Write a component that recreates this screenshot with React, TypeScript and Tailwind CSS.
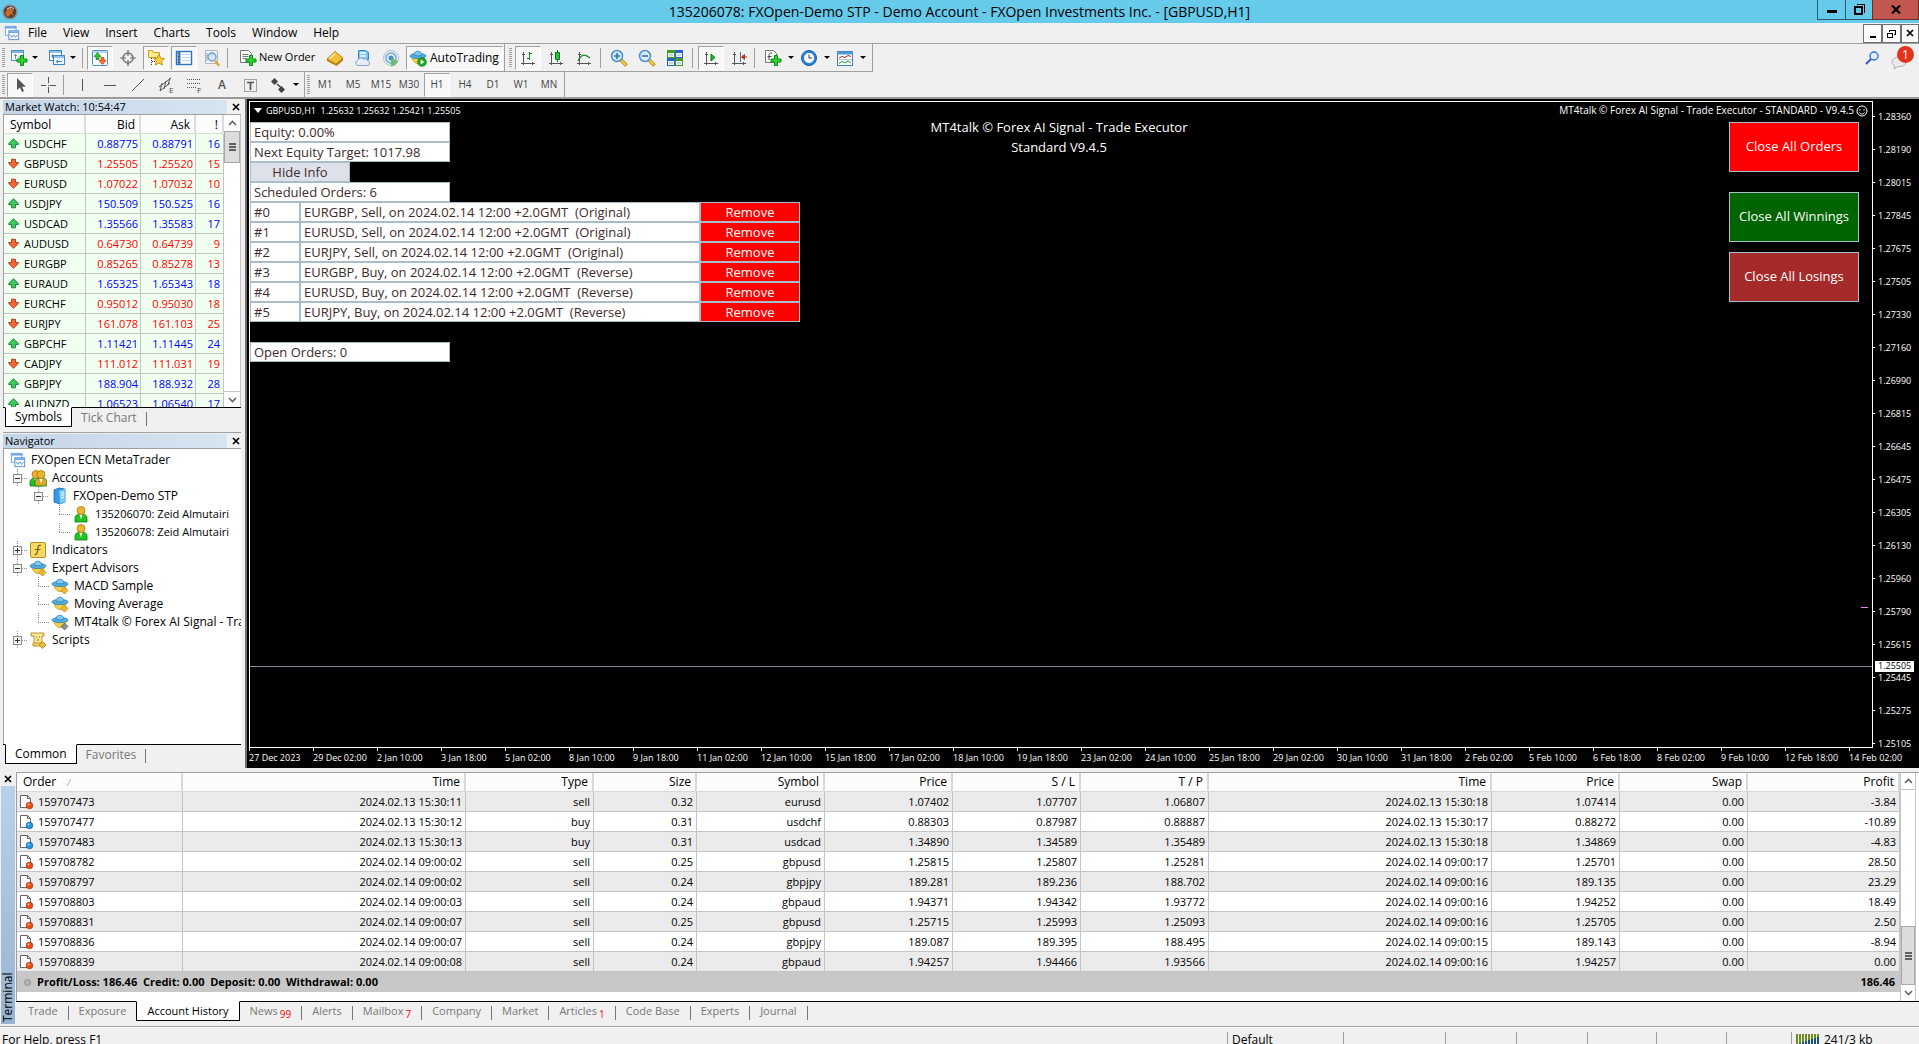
import { useState } from 'react'
import type { ReactNode } from 'react'

type Quote = [string, string, string, number, boolean]

const quotes: Quote[] = [
  ['USDCHF', '0.88775', '0.88791', 16, true],
  ['GBPUSD', '1.25505', '1.25520', 15, false],
  ['EURUSD', '1.07022', '1.07032', 10, false],
  ['USDJPY', '150.509', '150.525', 16, true],
  ['USDCAD', '1.35566', '1.35583', 17, true],
  ['AUDUSD', '0.64730', '0.64739', 9, false],
  ['EURGBP', '0.85265', '0.85278', 13, false],
  ['EURAUD', '1.65325', '1.65343', 18, true],
  ['EURCHF', '0.95012', '0.95030', 18, false],
  ['EURJPY', '161.078', '161.103', 25, false],
  ['GBPCHF', '1.11421', '1.11445', 24, true],
  ['CADJPY', '111.012', '111.031', 19, false],
  ['GBPJPY', '188.904', '188.932', 28, true],
  ['AUDNZD', '1.06523', '1.06540', 17, true],
]

const scheduled = [
  'EURGBP, Sell, on 2024.02.14 12:00 +2.0GMT  (Original)',
  'EURUSD, Sell, on 2024.02.14 12:00 +2.0GMT  (Original)',
  'EURJPY, Sell, on 2024.02.14 12:00 +2.0GMT  (Original)',
  'EURGBP, Buy, on 2024.02.14 12:00 +2.0GMT  (Reverse)',
  'EURUSD, Buy, on 2024.02.14 12:00 +2.0GMT  (Reverse)',
  'EURJPY, Buy, on 2024.02.14 12:00 +2.0GMT  (Reverse)',
]

const prices = [
  '1.28360', '1.28190', '1.28015', '1.27845', '1.27675', '1.27505', '1.27330', '1.27160', '1.26990', '1.26815',
  '1.26645', '1.26475', '1.26305', '1.26130', '1.25960', '1.25790', '1.25615', '1.25445', '1.25275', '1.25105',
]

const dates = [
  '27 Dec 2023', '29 Dec 02:00', '2 Jan 10:00', '3 Jan 18:00', '5 Jan 02:00', '8 Jan 10:00', '9 Jan 18:00',
  '11 Jan 02:00', '12 Jan 10:00', '15 Jan 18:00', '17 Jan 02:00', '18 Jan 10:00', '19 Jan 18:00', '23 Jan 02:00',
  '24 Jan 10:00', '25 Jan 18:00', '29 Jan 02:00', '30 Jan 10:00', '31 Jan 18:00', '2 Feb 02:00', '5 Feb 10:00',
  '6 Feb 18:00', '8 Feb 02:00', '9 Feb 10:00', '12 Feb 18:00', '14 Feb 02:00',
]

const history = [
  ['159707473', '2024.02.13 15:30:11', 'sell', '0.32', 'eurusd', '1.07402', '1.07707', '1.06807', '2024.02.13 15:30:18', '1.07414', '0.00', '-3.84'],
  ['159707477', '2024.02.13 15:30:12', 'buy', '0.31', 'usdchf', '0.88303', '0.87987', '0.88887', '2024.02.13 15:30:17', '0.88272', '0.00', '-10.89'],
  ['159707483', '2024.02.13 15:30:13', 'buy', '0.31', 'usdcad', '1.34890', '1.34589', '1.35489', '2024.02.13 15:30:18', '1.34869', '0.00', '-4.83'],
  ['159708782', '2024.02.14 09:00:02', 'sell', '0.25', 'gbpusd', '1.25815', '1.25807', '1.25281', '2024.02.14 09:00:17', '1.25701', '0.00', '28.50'],
  ['159708797', '2024.02.14 09:00:02', 'sell', '0.24', 'gbpjpy', '189.281', '189.236', '188.702', '2024.02.14 09:00:16', '189.135', '0.00', '23.29'],
  ['159708803', '2024.02.14 09:00:03', 'sell', '0.24', 'gbpaud', '1.94371', '1.94342', '1.93772', '2024.02.14 09:00:16', '1.94252', '0.00', '18.49'],
  ['159708831', '2024.02.14 09:00:07', 'sell', '0.25', 'gbpusd', '1.25715', '1.25993', '1.25093', '2024.02.14 09:00:16', '1.25705', '0.00', '2.50'],
  ['159708836', '2024.02.14 09:00:07', 'sell', '0.24', 'gbpjpy', '189.087', '189.395', '188.495', '2024.02.14 09:00:15', '189.143', '0.00', '-8.94'],
  ['159708839', '2024.02.14 09:00:08', 'sell', '0.24', 'gbpaud', '1.94257', '1.94466', '1.93566', '2024.02.14 09:00:16', '1.94257', '0.00', '0.00'],
]

const Svg = ({ size = 18, children }: { size?: number; children: ReactNode }) => (
  <svg width={size} height={size} viewBox="0 0 18 18" fill="none" className="shrink-0" aria-hidden="true">
    {children}
  </svg>
)

const Plus = () => (
  <path d="M10.5 6.5h3v3.5h3.5v3h-3.5v3.5h-3v-3.5H7v-3h3.5z" fill="#2fd32f" stroke="#0b8a12" />
)

const NewChartIcon = () => (
  <Svg>
    <rect x="1.5" y="1.5" width="12" height="10" fill="#fff" stroke="#4f8ecb" />
    <path d="M2 3h11" stroke="#7fb4e6" strokeWidth="2" />
    <path d="M5.5 5v5M4 6.5h3M8 8h3" stroke="#6d8fb5" />
    <Plus />
  </Svg>
)

const ProfilesIcon = () => (
  <Svg>
    <rect x="1.5" y="1.5" width="12" height="10" fill="#fff" stroke="#3f86cc" />
    <path d="M2 3h11" stroke="#8fc0ee" strokeWidth="2" />
    <path d="M3 7h2M4.5 5v4" stroke="#6d8fb5" />
    <rect x="5.5" y="6.5" width="11" height="9" fill="#e9f3fd" stroke="#3f86cc" />
    <path d="M6 8h10" stroke="#8fc0ee" strokeWidth="2" />
    <path d="M8 12.5h6M9.5 11v3" stroke="#3f86cc" />
  </Svg>
)

const MarketWatchIcon = () => (
  <Svg>
    <rect x="1.5" y="1.5" width="15" height="15" rx="1" fill="#fff" stroke="#4a8fd0" />
    <path d="M2 3h14" stroke="#b5d6f5" strokeWidth="2" />
    <path d="M6.5 3.5 10 7.5H8v3H5v-3H3z" fill="#35c435" stroke="#0e7f12" strokeWidth=".7" />
    <path d="m11.5 15.5-3.5-4h2v-3h3v3h2z" fill="#ff7133" stroke="#b8370b" strokeWidth=".7" />
  </Svg>
)

const TargetIcon = () => (
  <Svg>
    <circle cx="9" cy="9" r="5" stroke="#777" strokeWidth="1.5" />
    <path d="M9 1v6M9 11v6M1 9h6M11 9h6" stroke="#666" strokeWidth="1.2" />
  </Svg>
)

const NavigatorIcon = () => (
  <Svg>
    <path d="M1.5 8.5v-7h4l1 2h6v5z" fill="#ffe98c" stroke="#c9a227" />
    <path d="M4.5 9v8M5 12.5h3" stroke="#333" strokeDasharray="1 1" />
    <path d="m12 5.5 1.7 3.6 3.8.4-2.8 2.6.8 4-3.5-2-3.5 2 .8-4-2.8-2.6 3.8-.4z" fill="#ffd23c" stroke="#b98412" strokeWidth=".8" />
  </Svg>
)

const TerminalIcon = () => (
  <Svg>
    <rect x="1.5" y="2.5" width="15" height="13" fill="#fff" stroke="#2f74b8" strokeWidth="1.4" />
    <path d="M4 3v12" stroke="#4f86c2" strokeWidth="3" />
    <path d="M4 4v11" stroke="#1b2f45" strokeDasharray="1 2" />
    <path d="M7 5.5h8M7 8.5h8M7 11.5h8" stroke="#bcd2ee" />
  </Svg>
)

const TesterIcon = () => (
  <Svg>
    <path d="M2.5 1.5h12v13h-12z" fill="#f4f4f4" stroke="#b5b5b5" />
    <path d="M4 4v8M4 6h8M8 3v8" stroke="#8ba7c5" />
    <circle cx="9" cy="8" r="4" fill="#cfe6fa" fillOpacity=".8" stroke="#6b9ccc" strokeWidth="1.3" />
    <path d="m12 12 4 4.5" stroke="#d9a72a" strokeWidth="2.5" />
  </Svg>
)

const NewOrderIcon = () => (
  <Svg>
    <path d="M1.5 1.5h8l3 3v9h-11z" fill="#fff" stroke="#777" />
    <path d="M3.5 5.5h6M3.5 7.5h6M3.5 9.5h4" stroke="#777" />
    <Plus />
  </Svg>
)

const BookIcon = () => (
  <Svg>
    <path d="m1 10 8-7.5L17 9l-7 6z" fill="#f3c23c" stroke="#b98210" />
    <path d="m1 10 9 5 7-6v2.5L10.5 17 1 12z" fill="#b98210" />
    <path d="m3.5 9.5 5.5-5" stroke="#fff0ae" strokeWidth="1.5" />
  </Svg>
)

const CloudIcon = () => (
  <Svg>
    <path d="M4.5 1.5h7l3 2v7h-10z" fill="#7cc2f5" stroke="#2a86d0" />
    <path d="M6 4h6M6 7h6" stroke="#fff" strokeWidth="1.5" />
    <path d="M3.5 16.5a2.7 2.7 0 0 1 0-5 3.5 3.5 0 0 1 6-1.5 3 3 0 0 1 4 1.5 2.6 2.6 0 0 1 .5 5z" fill="#e5edf7" stroke="#7fa3cc" />
  </Svg>
)

const SignalIcon = () => (
  <Svg>
    <circle cx="9" cy="9" r="7.5" fill="#e4eef5" stroke="#a9c4d8" />
    <circle cx="9" cy="9" r="5" stroke="#7aa6ce" strokeWidth="1.4" />
    <circle cx="9" cy="9" r="2.5" fill="#3f8fd0" />
    <path d="M9 9v8.5A8 8 0 0 0 16 12" fill="#59b659" fillOpacity=".8" />
  </Svg>
)

const Hat = ({ badge }: { badge: ReactNode }) => (
  <Svg>
    <path d="M3 8c1 5 4 7 7 6.5S15 10 15 8z" fill="#f7d046" stroke="#c79518" strokeWidth=".8" />
    <ellipse cx="9" cy="7" rx="8" ry="2.6" fill="#55aee0" stroke="#2b7cb4" strokeWidth=".8" />
    <path d="M5 6c0-5 7.5-5 8 0-2 1.2-6 1.2-8 0z" fill="#7cc8ee" stroke="#2b7cb4" strokeWidth=".8" />
    {badge}
  </Svg>
)

const AutoTradingIcon = () => (
  <Hat
    badge={
      <>
        <circle cx="13" cy="13" r="4.3" fill="#1fae25" stroke="#0c7d12" strokeWidth=".8" />
        <path d="m11.7 10.5 3.5 2.5-3.5 2.5z" fill="#fff" />
      </>
    }
  />
)

const ExpertIcon = ({ grey }: { grey?: boolean }) => (
  <Hat badge={<path d="m13.5 10 3.5 3.5-3.5 3.5-3.5-3.5z" fill={grey ? '#8c8c8c' : '#e9b93a'} stroke={grey ? '#666' : '#b5860f'} strokeWidth=".8" />} />
)

const Axes = ({ children }: { children: ReactNode }) => (
  <Svg>
    <path d="M4.5 3v13M2 14.5h14M3 5.5h3M13.5 13v3" stroke="#555" shapeRendering="crispEdges" />
    {children}
  </Svg>
)

const ZoomIcon = ({ plus }: { plus?: boolean }) => (
  <Svg>
    <path d="m11 11 5.5 5.5" stroke="#b8860b" strokeWidth="3.6" />
    <path d="m11 11 5 5" stroke="#f5cc45" strokeWidth="2" />
    <circle cx="7" cy="7" r="5.5" fill="#d5ebfb" stroke="#4a90cc" strokeWidth="1.5" />
    <path d={plus ? 'M4 7h6M7 4v6' : 'M4 7h6'} stroke="#2f74b8" strokeWidth="1.6" />
  </Svg>
)

const TileIcon = () => (
  <Svg>
    <path d="M1 1h8v8H1zM9 9h8v8H9z" fill="#3f9e1d" />
    <path d="M9 1h8v8H9zM1 9h8v8H1z" fill="#2a61d4" />
    <path d="M2 4h6v4H2zM10 4h6v4h-6zM2 12h6v4H2zM10 12h6v4h-6z" fill="#eef4ea" />
    <path d="M3 6h4M11 6h4M3 14h4M11 14h4" stroke="#8fb3dd" />
  </Svg>
)

const AddIndicatorIcon = () => (
  <Svg>
    <path d="M1.5 1.5h8l3 3v9h-11z" fill="#fff" stroke="#777" />
    <path d="M8 4c-3 0-3 1-3 3v4M3.5 7.5h4" stroke="#444" />
    <Plus />
  </Svg>
)

const ClockIcon = () => (
  <Svg>
    <circle cx="9" cy="9" r="7.5" fill="#2b86dc" stroke="#155a9f" />
    <circle cx="9" cy="9" r="5" fill="#fff" />
    <path d="M9 5.5V9h3" stroke="#333" />
  </Svg>
)

const TemplateIcon = () => (
  <Svg>
    <rect x="1.5" y="2.5" width="15" height="14" fill="#fff" stroke="#3f7fc0" />
    <path d="M1 4h16" stroke="#4f95dc" strokeWidth="3" />
    <path d="M2 10.5h14" stroke="#b5c8dd" />
    <path d="m3 9 3-1.5 3 1 3-2 3 1" stroke="#b3261e" />
    <path d="m3 14.5 3-2 3 1.5 3-2 3 2" stroke="#1d9a2a" />
  </Svg>
)

const LogoIcon = () => (
  <Svg size={16}>
    <rect x="1.5" y="1.5" width="12" height="10" fill="#fff" stroke="#5f9ddf" />
    <path d="M1 3h13" stroke="#6ea8e8" strokeWidth="2" />
    <rect x="5.5" y="6.5" width="11" height="10" fill="#fff" stroke="#4a86d8" />
    <path d="M5 8h12" stroke="#6ea8e8" strokeWidth="2" />
    <path d="m7 11 2 3 2-3 2 3 2-3" stroke="#4a86d8" />
  </Svg>
)

const Person = ({ x = 0, body = '#21c421' }: { x?: number; body?: string }) => (
  <g transform={`translate(${x} 0)`}>
    <path d="M3 17v-4c0-3 3-4 6-4s6 1 6 4v4z" fill={body} stroke="#0d7f12" strokeWidth=".8" />
    <path d="m7.5 9.5 1.5 5 1.5-5z" fill="#fff" />
    <circle cx="9" cy="5.5" r="4" fill="#e8b52d" stroke="#a9780c" strokeWidth=".8" />
  </g>
)

const ServerIcon = () => (
  <Svg>
    <path d="m4 3 5-2 6 1v13l-5 2-6-2z" fill="#2f9be8" stroke="#1465a8" strokeWidth=".8" />
    <path d="m9 4 6-2v13l-5 2z" fill="#7cc6fa" />
    <path d="m11 6 3-1M11 8.5l3-1M11 11l3-1" stroke="#fff" />
  </Svg>
)

const FunctionIcon = () => (
  <Svg>
    <rect x="1.5" y="1.5" width="15" height="15" rx="1.5" fill="#f8d866" stroke="#b98f1c" />
    <path d="M12 4.5c-3-1-3 1.5-3.3 4.5S8 14 5.5 13.5M6 8.5h5.5" stroke="#7a5b06" strokeWidth="1.2" />
  </Svg>
)

const ScriptIcon = () => (
  <Svg>
    <path d="M2 2h13v3h-2v8H5V5H2z" fill="#fbe79a" stroke="#b9962c" />
    <path d="M4 12h9v3H4z" fill="#f3d25c" stroke="#b9962c" />
    <path d="M7 6h1M10 6h1M8 9h2" stroke="#8a6d12" />
    <path d="m13.5 10.5 3.5 3.5-3.5 3.5-3.5-3.5z" fill="#e9b93a" stroke="#b5860f" strokeWidth=".8" />
  </Svg>
)

const ArrowMark = ({ up }: { up: boolean }) => (
  <svg width="11" height="11" viewBox="0 0 11 11" className="shrink-0" aria-hidden="true">
    <path
      d={up ? 'M5.5.8 10.3 5.5v1H7.5v3.3h-4V6.5H.7v-1z' : 'M5.5 10.2.7 5.5v-1h2.8V1.2h4v3.3h2.8v1z'}
      fill={up ? '#3fc95a' : '#f2683a'}
      stroke={up ? '#14803a' : '#a83a12'}
      strokeWidth=".9"
    />
  </svg>
)

const OrderIcon = ({ sell }: { sell: boolean }) => (
  <svg width="15" height="16" viewBox="0 0 15 16" className="shrink-0" aria-hidden="true">
    <path d="M1.5 1.5h7l3 3v9h-10z" fill="#fff" stroke="#666" />
    <path d="M8.5 1.5v3h3" fill="none" stroke="#666" />
    <circle cx="10.5" cy="11.5" r="3.3" fill={sell ? '#f04a14' : '#2196ea'} stroke={sell ? '#a5300a' : '#0d5f9f'} strokeWidth=".7" />
    <circle cx="9.5" cy="10.5" r="1" fill="#fff" fillOpacity=".6" />
  </svg>
)

const CloseMark = () => (
  <svg width="8" height="8" viewBox="0 0 8 8" aria-hidden="true">
    <path d="m1 1 6 6M7 1 1 7" stroke="#000" strokeWidth="1.7" />
  </svg>
)

const Chevron = ({ down }: { down?: boolean }) => (
  <svg width="9" height="6" viewBox="0 0 9 6" fill="none" aria-hidden="true">
    <path d={down ? 'm1 1 3.5 3.5L8 1' : 'm1 5 3.5-3.5L8 5'} stroke="#666" strokeWidth="1.6" />
  </svg>
)

const Tool = ({ label, on, wide, children }: { label: string; on?: boolean; wide?: boolean; children: ReactNode }) => (
  <button
    type="button"
    aria-label={label}
    className={`flex h-6 shrink-0 items-center justify-center border ${wide ? 'gap-[2px] px-[2px]' : 'w-[26px]'} ${
      on ? 'border-t-[#a0a0a0] border-l-[#a0a0a0] border-r-white border-b-white bg-[#f7f7f7]' : 'border-transparent'
    }`}
  >
    {children}
  </button>
)

const Caret = () => (
  <svg width="6" height="3" viewBox="0 0 6 3" className="shrink-0" aria-hidden="true">
    <path d="M0 0h6L3 3z" fill="#000" />
  </svg>
)

const Divider = () => <div className="h-5 w-px shrink-0 bg-[#a0a0a0]" />

const Grip = () => (
  <div className="h-5 w-[3px] shrink-0 bg-[repeating-linear-gradient(#a0a0a0_0_1px,transparent_1px_2px)]" />
)

const WindowButtons = () => (
  <div className="absolute top-0 right-0 flex">
    <button type="button" aria-label="Minimize" className="flex h-5 w-[29px] items-center justify-center border-x border-b border-[#2f5a6a] pt-1">
      <span className="h-[3px] w-[10px] bg-black" />
    </button>
    <button type="button" aria-label="Restore" className="flex h-5 w-[26px] items-center justify-center border-b border-[#2f5a6a]">
      <svg width="11" height="11" viewBox="0 0 11 11" fill="none" shapeRendering="crispEdges">
        <path d="M3 .5h7.5V9" stroke="#000" />
        <rect x="1" y="3" width="7" height="7" stroke="#000" strokeWidth="2" />
      </svg>
    </button>
    <button type="button" aria-label="Close" className="flex h-5 w-[47px] items-center justify-center border-x border-b border-[#6e2c27] bg-[#c2574f]">
      <svg width="10" height="9" viewBox="0 0 10 9">
        <path d="m1 .5 8 8M9 .5l-8 8" stroke="#000" strokeWidth="2.2" />
      </svg>
    </button>
  </div>
)

const MenuBar = () => (
  <nav className="flex h-5 shrink-0 items-center bg-[#f0f0f0] pl-1 text-[12px]">
    <LogoIcon />
    <div className="flex gap-4 pl-2">
      {['File', 'View', 'Insert', 'Charts', 'Tools', 'Window', 'Help'].map((item) => (
        <button key={item} type="button">
          {item}
        </button>
      ))}
    </div>
    <div className="grow" />
    <div className="flex">
      <button type="button" aria-label="Minimize chart" className="flex h-[19px] w-[19px] items-center justify-center border border-[#707070] bg-[#fafafa] pt-2">
        <span className="h-[2px] w-[6px] bg-black" />
      </button>
      <button type="button" aria-label="Restore chart" className="flex h-[19px] w-[19px] items-center justify-center border border-[#707070] bg-[#fafafa]">
        <svg width="9" height="9" viewBox="0 0 9 9" fill="none" shapeRendering="crispEdges">
          <path d="M2.5 3V1h6v4.5H6.5" stroke="#000" />
          <path d="M.5 4h5v4.5h-5zM2 1h7" stroke="#000" />
        </svg>
      </button>
      <button type="button" aria-label="Close chart" className="flex h-[19px] w-[18px] items-center justify-center border border-[#707070] bg-[#fafafa]">
        <CloseMark />
      </button>
    </div>
  </nav>
)

const MainToolbar = () => (
  <div className="flex h-[29px] shrink-0 items-center border-t border-[#a0a0a0] bg-[#f0f0f0]">
    <div className="flex h-full items-center border-r border-b border-[#a0a0a0] pr-px pl-[2px]">
      <Grip />
      <div className="flex items-center pl-px">
        <Tool label="New chart">
          <NewChartIcon />
        </Tool>
        <Caret />
        <div className="w-[6px]" />
        <Tool label="Profiles">
          <ProfilesIcon />
        </Tool>
        <Caret />
        <div className="w-[6px]" />
        <Divider />
      </div>
      <div className="flex items-center gap-[2px] pl-1">
        <Tool label="Market Watch" on>
          <MarketWatchIcon />
        </Tool>
        <Tool label="Data Window">
          <TargetIcon />
        </Tool>
        <Tool label="Navigator" on>
          <NavigatorIcon />
        </Tool>
        <Tool label="Terminal" on>
          <TerminalIcon />
        </Tool>
        <Tool label="Strategy Tester">
          <TesterIcon />
        </Tool>
        <Divider />
      </div>
      <div className="flex items-center gap-[2px] pl-2">
        <Tool label="New Order" wide>
          <NewOrderIcon />
          <span className="w-[58px] text-left text-[11px] whitespace-nowrap">New Order</span>
        </Tool>
        <Tool label="MetaEditor">
          <BookIcon />
        </Tool>
        <Tool label="Cloud">
          <CloudIcon />
        </Tool>
        <Tool label="Signals">
          <SignalIcon />
        </Tool>
        <Tool label="AutoTrading" on wide>
          <AutoTradingIcon />
          <span className="w-[71px] pl-px text-left text-[12px] whitespace-nowrap">AutoTrading</span>
        </Tool>
      </div>
    </div>
    <div className="flex h-full items-center border-r border-b border-[#a0a0a0] pl-1">
      <Grip />
      <div className="flex items-center gap-[2px] pl-[3px]">
        <Tool label="Bar chart" on>
          <Axes>
            <path d="M10.5 3v8M8 9.5h3M10 4.5h3" stroke="#118a1b" strokeWidth="1.5" shapeRendering="crispEdges" />
          </Axes>
        </Tool>
        <Tool label="Candlesticks">
          <Axes>
            <path d="M10.5 1v12" stroke="#0b7a14" />
            <path d="M8.5 3.5h4v7h-4z" fill="#25c632" stroke="#0b7a14" />
          </Axes>
        </Tool>
        <Tool label="Line chart">
          <Axes>
            <path d="M3 12c3-6 6-8 12-3" stroke="#118a1b" strokeWidth="1.2" />
          </Axes>
        </Tool>
      </div>
      <div className="flex items-center gap-[2px] pl-[3px]">
        <Divider />
        <div className="w-px" />
        <Tool label="Zoom in">
          <ZoomIcon plus />
        </Tool>
        <Tool label="Zoom out">
          <ZoomIcon />
        </Tool>
        <Tool label="Tile windows">
          <TileIcon />
        </Tool>
      </div>
      <div className="flex items-center gap-[2px] pl-1">
        <Divider />
        <div className="w-px" />
        <Tool label="Auto scroll" on>
          <Axes>
            <path d="m9 5 4 3.5L9 12z" fill="#25b832" stroke="#0b7a14" />
          </Axes>
        </Tool>
        <Tool label="Chart shift">
          <Axes>
            <path d="M10.5 3v10" stroke="#4472a8" />
            <path d="m11.5 8 3-2.5v5zM14 8h3" fill="#b8370b" stroke="#b8370b" />
          </Axes>
        </Tool>
        <Divider />
      </div>
      <div className="flex items-center gap-[2px] pr-[6px] pl-[5px]">
        <Tool label="Indicators">
          <AddIndicatorIcon />
        </Tool>
        <Caret />
        <Tool label="Periods">
          <ClockIcon />
        </Tool>
        <Caret />
        <Tool label="Templates">
          <TemplateIcon />
        </Tool>
        <Caret />
      </div>
    </div>
    <div className="grow" />
    <button type="button" aria-label="Search" className="mr-3">
      <svg width="14" height="14" viewBox="0 0 14 14" fill="none">
        <circle cx="9" cy="5" r="4" fill="#e3edfb" stroke="#3a6fd0" strokeWidth="1.4" />
        <path d="m6 8-5 5" stroke="#2f5fc4" strokeWidth="2.2" />
      </svg>
    </button>
    <button type="button" aria-label="1 message" className="relative mr-[5px] h-6 w-[23px]">
      <svg width="18" height="14" viewBox="0 0 18 14" className="absolute bottom-0 left-0" aria-hidden="true">
        <path d="M8 1C4 1 1 3 1 6c0 2 1 3 3 4l-1 3 4-2.5h2c4 0 6-2 6-4.5S12 1 8 1z" fill="#e9e9ee" stroke="#b0b0b8" />
      </svg>
      <span className="absolute top-0 right-0 flex h-[17px] w-[17px] items-center justify-center rounded-full bg-[#e0341c] text-[12px] leading-[17px] text-white">
        1
      </span>
    </button>
  </div>
)

const Fibo = ({ letter }: { letter: string }) => (
  <>
    <path
      d={letter === 'E' ? 'M2 11 14 2M3 15 13 7M5 7l-2 8M9 5 7 13M13 2l-2 7' : 'M2 3.5h13M2 7.5h13M2 11.5h9'}
      stroke="#555"
      strokeDasharray={letter === 'E' ? undefined : '1 1'}
    />
    <text x="12" y="17" fontSize="8" fill="#444">
      {letter}
    </text>
  </>
)

const DrawToolbar = () => (
  <div className="flex h-[27px] shrink-0 items-center border-b-2 border-[#9a9a9a] bg-[#f0f0f0]">
    <div className="flex h-full items-center gap-[2px] border-r border-[#a0a0a0] pr-[5px] pl-[2px]">
      <Grip />
      <Tool label="Cursor" on>
        <Svg>
          <path d="M6 2v12l3-2.5 2 4.5 2-1-2-4.2h4z" fill="#555" />
        </Svg>
      </Tool>
      <Tool label="Crosshair">
        <Svg>
          <path d="M9.5 1v6M9.5 11v6M2 9.5h5M11 9.5h6M9 9.5h1" stroke="#555" shapeRendering="crispEdges" />
        </Svg>
      </Tool>
      <Divider />
      <div className="w-px" />
      <Tool label="Vertical line">
        <Svg>
          <path d="M9.5 3v12" stroke="#555" />
        </Svg>
      </Tool>
      <Tool label="Horizontal line">
        <Svg>
          <path d="M3 9.5h12" stroke="#555" />
        </Svg>
      </Tool>
      <Tool label="Trendline">
        <Svg>
          <path d="m3 15 12-12" stroke="#555" />
        </Svg>
      </Tool>
      <Tool label="Equidistant channel">
        <Svg>
          <Fibo letter="E" />
        </Svg>
      </Tool>
      <Tool label="Fibonacci retracement">
        <Svg>
          <Fibo letter="F" />
        </Svg>
      </Tool>
      <Tool label="Text">
        <span className="text-[12px] font-semibold text-[#555]">A</span>
      </Tool>
      <Tool label="Text label">
        <Svg>
          <rect x="3.5" y="3.5" width="12" height="12" stroke="#555" strokeDasharray="1 1" />
          <path d="M6 6.5h7M9.5 6v8" stroke="#555" strokeWidth="1.7" />
        </Svg>
      </Tool>
      <Tool label="Arrows">
        <Svg>
          <path d="M5.5 2 9 5.5 5.5 9 2 5.5zM7.5 8.5l1-1 4 3.5-1 1zM12.5 10 16 13.5 12.5 17 9 13.5z" fill="#444" />
        </Svg>
      </Tool>
      <Caret />
    </div>
    <div className="flex h-full items-center gap-[2px] border-r border-[#a0a0a0] pr-[2px] pl-[2px]">
      <Grip />
      {['M1', 'M5', 'M15', 'M30', 'H1', 'H4', 'D1', 'W1', 'MN'].map((tf) => (
        <Tool key={tf} label={tf} on={tf === 'H1'}>
          <span className="text-[10px] text-[#444]">{tf}</span>
        </Tool>
      ))}
    </div>
  </div>
)

const PanelTitle = ({ text }: { text: string }) => (
  <div className="flex h-[14px] shrink-0 items-center">
    <div className="flex h-full grow items-center bg-linear-to-r from-[#c3d5e8] to-[#d7e4f2] pl-[2px] text-[11px] leading-[14px]">{text}</div>
    <button type="button" aria-label={`Close ${text}`} className="flex w-[14px] justify-end pr-px">
      <CloseMark />
    </button>
  </div>
)

const SideTabs = ({ active, other }: { active: string; other: string }) => (
  <div className="flex h-5 shrink-0 border-t border-black bg-[#f0f0f0] pl-[2px] text-[12px] leading-[18px]">
    <button type="button" className="-mt-px border border-t-white border-black bg-white px-[9px]">
      {active}
    </button>
    <button type="button" className="px-[9px] text-[#777]">
      {other}
    </button>
    <div className="mt-1 h-[14px] w-px bg-[#777]" />
  </div>
)

const MarketWatch = () => (
  <section className="flex h-[334px] shrink-0 flex-col border-b border-[#a0a0a0] pt-px pb-[5px]">
    <PanelTitle text="Market Watch: 10:54:47" />
    <div className="flex min-h-0 grow border-t border-l border-[#a0a0a0] bg-white">
      <div className="grow overflow-hidden">
        <table className="w-full table-fixed border-separate border-spacing-0">
          <colgroup>
            <col className="w-[82px]" />
            <col className="w-[55px]" />
            <col className="w-[55px]" />
            <col className="w-[28px]" />
          </colgroup>
          <thead className="bg-[#fcfcfc] text-[12px]">
            <tr className="h-[19px]">
              <th className="border-r-2 border-b border-[#dcdcdc] pt-px pl-[6px] text-left leading-4 font-normal">Symbol</th>
              {['Bid', 'Ask', '!'].map((h) => (
                <th key={h} className="border-r-2 border-b border-[#dcdcdc] pt-px pr-1 text-right leading-4 font-normal">
                  {h}
                </th>
              ))}
            </tr>
          </thead>
          <tbody className="bg-[#f0fff0] text-[11px] leading-4">
            {quotes.map(([symbol, bid, ask, spread, up]) => (
              <tr key={symbol} className={`h-5 ${up ? 'text-[#0000ff]' : 'text-[#ff0000]'}`}>
                <td className="border-r border-b border-[#c4c4c4] pl-1 text-black">
                  <div className="flex items-center gap-[5px]">
                    <ArrowMark up={up} />
                    {symbol}
                  </div>
                </td>
                <td className="border-r border-b border-[#c4c4c4] pr-[2px] text-right">{bid}</td>
                <td className="border-r border-b border-[#c4c4c4] pr-[2px] text-right">{ask}</td>
                <td className="border-r border-b border-[#c4c4c4] pr-[3px] text-right">{spread}</td>
              </tr>
            ))}
          </tbody>
        </table>
      </div>
      <div className="flex w-[17px] shrink-0 flex-col items-center border-r border-[#c4c4c4]">
        <div className="flex h-4 items-center">
          <Chevron />
        </div>
        <div className="flex h-8 w-full flex-col items-center justify-center gap-px border border-[#a8a8a8] bg-[#dcdcdc]">
          <span className="h-[2px] w-[7px] bg-[#606060]" />
          <span className="h-[2px] w-[7px] bg-[#606060]" />
          <span className="h-[2px] w-[7px] bg-[#606060]" />
        </div>
        <div className="grow" />
        <div className="flex h-4 w-full items-center justify-center border-t border-[#c4c4c4]">
          <Chevron down />
        </div>
      </div>
    </div>
    <SideTabs active="Symbols" other="Tick Chart" />
  </section>
)

const Toggle = ({ open }: { open: boolean }) => (
  <svg width="15" height="18" viewBox="0 0 15 18" className="-mr-1 shrink-0" shapeRendering="crispEdges" aria-hidden="true">
    <path d="M4.5 0v18M9 9.5h6" stroke="#909090" strokeDasharray="1 1" />
    <rect x=".5" y="5.5" width="8" height="8" fill="#f4f4f4" stroke="#8c8c8c" />
    <path d={open ? 'M2 9.5h5' : 'M2 9.5h5M4.5 7v5'} stroke="#333" />
  </svg>
)

const Branch = () => (
  <svg width="12" height="18" viewBox="0 0 12 18" className="-mr-1 shrink-0" shapeRendering="crispEdges" aria-hidden="true">
    <path d="M.5 0v10M0 9.5h12" stroke="#909090" strokeDasharray="1 1" />
  </svg>
)

const Navigator = () => (
  <section className="flex min-h-0 grow flex-col pt-px pb-1">
    <PanelTitle text="Navigator" />
    <div className="grow overflow-hidden border-t border-l border-[#a0a0a0] bg-white pt-[2px] text-[12px] leading-[18px] whitespace-nowrap">
      <div className="flex h-[18px] items-center gap-[5px] pl-[6px]">
        <LogoIcon />
        FXOpen ECN MetaTrader
      </div>
      <div className="flex h-[18px] items-center gap-[5px] pl-[9px]">
        <Toggle open />
        <Svg>
          <Person x={-2} />
          <Person x={3} body="#d9a92a" />
        </Svg>
        <span>Accounts</span>
      </div>
      <div className="flex h-[18px] items-center gap-[5px] pl-[30px]">
        <Toggle open />
        <ServerIcon />
        <span>FXOpen-Demo STP</span>
      </div>
      {['135206070: Zeid Almutairi', '135206078: Zeid Almutairi'].map((account) => (
        <div key={account} className="flex h-[18px] items-center gap-[5px] pl-[55px]">
          <Branch />
          <Svg>
            <Person />
          </Svg>
          <span className="text-[11px]">{account}</span>
        </div>
      ))}
      <div className="flex h-[18px] items-center gap-[5px] pl-[9px]">
        <Toggle open={false} />
        <FunctionIcon />
        <span>Indicators</span>
      </div>
      <div className="flex h-[18px] items-center gap-[5px] pl-[9px]">
        <Toggle open />
        <ExpertIcon />
        <span>Expert Advisors</span>
      </div>
      {['MACD Sample', 'Moving Average', 'MT4talk © Forex AI Signal - Trade Executor'].map((expert, i) => (
        <div key={expert} className="flex h-[18px] items-center gap-[5px] pl-[34px]">
          <Branch />
          <ExpertIcon grey={i === 2} />
          <span>{expert}</span>
        </div>
      ))}
      <div className="flex h-[18px] items-center gap-[5px] pl-[9px]">
        <Toggle open={false} />
        <ScriptIcon />
        <span>Scripts</span>
      </div>
    </div>
    <SideTabs active="Common" other="Favorites" />
  </section>
)

const InfoBox = ({ children }: { children: ReactNode }) => (
  <div className="h-5 w-[200px] border border-[#a9bccb] bg-white pl-[3px] leading-[18px]">{children}</div>
)

const CloseButton = ({ text, color }: { text: string; color: string }) => (
  <button type="button" className={`h-[50px] w-[130px] border border-[#a9bccb] text-white ${color}`}>
    {text}
  </button>
)

const Chart = () => {
  const [showInfo, setShowInfo] = useState<boolean>(true)
  return (
    <main className="flex min-w-0 grow flex-col border-l-2 border-[#707070] bg-black text-white">
      <div className="flex min-h-0 grow pt-[2px] pl-[2px]">
        <div className="relative min-w-0 grow border border-white">
          <div className="flex h-5 items-center pb-[3px] text-[10px]">
            <svg width="8" height="5" viewBox="0 0 8 5" className="ml-1" aria-hidden="true">
              <path d="M0 0h8L4 5z" fill="#fff" />
            </svg>
            <span className="pl-1 text-[9px] whitespace-pre">GBPUSD,H1  1.25632 1.25632 1.25421 1.25505</span>
            <div className="grow" />
            <span>MT4talk © Forex AI Signal - Trade Executor - STANDARD - V9.4.5</span>
            <svg width="12" height="12" viewBox="0 0 12 12" fill="none" className="mr-1 ml-[2px]" aria-hidden="true">
              <circle cx="6" cy="6" r="5" stroke="#fff" />
              <path d="M4 4v1.5M8 4v1.5M3.5 7.5c1 2 4 2 5 0" stroke="#fff" />
            </svg>
          </div>
          <div className="flex items-start justify-between pr-[13px] text-[13px] text-[#3f2b2b]">
            <div className="flex w-[550px] flex-col">
              <InfoBox>Equity: 0.00%</InfoBox>
              <InfoBox>Next Equity Target: 1017.98</InfoBox>
              <button
                type="button"
                onClick={() => setShowInfo(!showInfo)}
                className="h-5 w-[100px] border border-[#a9bccb] bg-[#dee1ea] leading-[18px]"
              >
                Hide Info
              </button>
              <InfoBox>Scheduled Orders: 6</InfoBox>
              {showInfo &&
                scheduled.map((order, i) => (
                  <div key={order} className="flex h-5 leading-[18px]">
                    <div className="w-[50px] border border-[#a9bccb] bg-white pl-[3px]">#{i}</div>
                    <div className="w-[400px] border border-[#a9bccb] bg-white pl-[3px] whitespace-pre">{order}</div>
                    <button type="button" className="w-[100px] border border-[#a9bccb] bg-[#ff0000] text-white">
                      Remove
                    </button>
                  </div>
                ))}
              <div className="h-5" />
              <InfoBox>Open Orders: 0</InfoBox>
            </div>
            <div className="flex flex-col">
              <CloseButton text="Close All Orders" color="bg-[#ff0000]" />
              <div className="h-5" />
              <CloseButton text="Close All Winnings" color="bg-[#006400]" />
              <div className="h-[10px]" />
              <CloseButton text="Close All Losings" color="bg-[#a52a2a]" />
            </div>
          </div>
          <div className="absolute top-[15px] left-1/2 -translate-x-1/2 pr-1 text-center text-[13px] leading-5">
            MT4talk © Forex AI Signal - Trade Executor
            <br />
            Standard V9.4.5
          </div>
          <div className="absolute top-[564px] right-0 left-0 h-px bg-[#778899]" />
          <div className="absolute top-[505px] right-[4px] h-px w-[7px] bg-[#ee82ee]" />
        </div>
        <div className="relative w-[46px] shrink-0 text-[9px] leading-[10px]">
          {prices.map((price) => (
            <div key={price} className="-mt-px mb-px flex h-[33px] items-center">
              <span className="mr-[3px] h-px w-[2px] shrink-0 bg-white" />
              {price}
            </div>
          ))}
          <div className="absolute top-[560px] left-[2px] h-[11px] w-[39px] bg-white pl-[3px] leading-[10px] text-black">1.25505</div>
        </div>
      </div>
      <div className="flex h-5 shrink-0 overflow-hidden pl-[2px] text-[9px] leading-[14px] whitespace-nowrap">
        {dates.map((date) => (
          <div key={date} className="w-16 shrink-0">
            <div className="h-[3px] w-px bg-white" />
            {date}
          </div>
        ))}
      </div>
    </main>
  )
}

const headers = ['Order', 'Time', 'Type', 'Size', 'Symbol', 'Price', 'S / L', 'T / P', 'Time', 'Price', 'Swap', 'Profit']

const tabs: [string, string?][] = [
  ['Trade'],
  ['Exposure'],
  ['Account History'],
  ['News', '99'],
  ['Alerts'],
  ['Mailbox', '7'],
  ['Company'],
  ['Market'],
  ['Articles', '1'],
  ['Code Base'],
  ['Experts'],
  ['Journal'],
]

const Terminal = () => {
  const [active, setActive] = useState<string>('Account History')
  return (
    <section className="flex shrink-0 border-b border-[#a0a0a0] bg-[#f0f0f0] pt-1 pb-[2px]">
      <div className="flex w-4 shrink-0 flex-col px-px">
        <button type="button" aria-label="Close Terminal" className="flex h-[14px] items-center justify-center">
          <CloseMark />
        </button>
        <div className="flex grow rotate-180 items-start bg-linear-to-t from-[#b9d1ea] to-[#99b4d1] pt-[2px] text-[12px] leading-[14px] [writing-mode:vertical-rl]">
          Terminal
        </div>
      </div>
      <div className="min-w-0 grow">
        <div className="flex border-t border-l border-[#a0a0a0] bg-white">
          <div className="min-w-0 grow pb-[9px]">
            <table className="w-full table-fixed border-separate border-spacing-0">
              <colgroup>
                <col className="w-[166px]" />
                <col className="w-[283px]" />
                <col className="w-[128px]" />
                <col className="w-[103px]" />
                <col className="w-[128px]" />
                <col className="w-[128px]" />
                <col className="w-[128px]" />
                <col className="w-[128px]" />
                <col className="w-[283px]" />
                <col className="w-[128px]" />
                <col className="w-[128px]" />
                <col className="w-[152px]" />
              </colgroup>
              <thead className="bg-[#fcfcfc] text-[12px] leading-[18px]">
                <tr className="h-[19px]">
                  {headers.map((h, i) => (
                    <th
                      key={i}
                      className={`border-r-2 border-b border-[#d8d8d8] p-0 font-normal ${i === 0 ? 'pl-[6px] text-left' : 'pr-1 text-right'}`}
                    >
                      {h}
                      {i === 0 && <span className="pl-3 text-[9px] leading-3 text-[#888]">⁄</span>}
                    </th>
                  ))}
                </tr>
              </thead>
              <tbody className="text-[11px] leading-[18px]">
                {history.map((row) => (
                  <tr key={row[0]} className="h-5 odd:bg-[#ebebeb]">
                    {row.map((cell, i) => (
                      <td key={i} className={`border-r border-b border-[#c4c4c4] ${i === 0 ? 'pl-[2px]' : 'pr-[3px] text-right'}`}>
                        {i === 0 ? (
                          <div className="flex items-center gap-1">
                            <OrderIcon sell={row[2] === 'sell'} />
                            {cell}
                          </div>
                        ) : (
                          cell
                        )}
                      </td>
                    ))}
                  </tr>
                ))}
                <tr className="h-5 bg-[#c8c8c8] font-bold">
                  <td colSpan={11} className="pl-[7px]">
                    <div className="flex items-center gap-[6px] whitespace-pre">
                      <span className="h-[7px] w-[7px] rounded-full border border-[#8a8a8a] bg-[#b4b4b4]" />
                      Profit/Loss: 186.46  Credit: 0.00  Deposit: 0.00  Withdrawal: 0.00
                    </div>
                  </td>
                  <td className="pr-[5px] text-right">186.46</td>
                </tr>
              </tbody>
            </table>
          </div>
          <div className="mr-[3px] flex w-4 shrink-0 flex-col items-center border-x border-[#c4c4c4]">
            <div className="flex h-4 items-center">
              <Chevron />
            </div>
            <div className="w-full grow border-t border-[#c4c4c4]" />
            <div className="flex h-[59px] w-full flex-col items-center justify-center gap-px border border-[#a8a8a8] bg-[#dcdcdc]">
              <span className="h-[2px] w-[7px] bg-[#606060]" />
              <span className="h-[2px] w-[7px] bg-[#606060]" />
              <span className="h-[2px] w-[7px] bg-[#606060]" />
            </div>
            <div className="flex h-4 items-center">
              <Chevron down />
            </div>
          </div>
        </div>
        <div className="flex h-[23px] items-start border-t border-black pl-[2px] text-[11px] leading-[18px]">
          {tabs.map(([name, count], i) => (
            <div key={name} className="flex">
              <button
                type="button"
                onClick={() => setActive(name)}
                className={active === name ? '-mt-px border border-t-white border-black bg-white px-[10px]' : 'px-[10px] text-[#777]'}
              >
                {name}
                {count && <sub className="pl-[2px] text-[10px] text-[#ff0000]">{count}</sub>}
              </button>
              {name !== 'Account History' && tabs[i + 1]?.[0] !== 'Account History' && <div className="mt-1 h-[14px] w-px bg-[#777]" />}
            </div>
          ))}
        </div>
      </div>
    </section>
  )
}

const StatusBar = () => (
  <footer className="flex h-[17px] shrink-0 overflow-hidden border-t border-white bg-[#f0f0f0] pt-1 text-[12px] leading-[16px]">
    <div className="grow pl-[2px]">For Help, press F1</div>
    <div className="w-[116px] border-l border-[#a0a0a0] pl-1">Default</div>
    <div className="w-[102px] border-l border-[#a0a0a0]" />
    <div className="w-[71px] border-l border-[#a0a0a0]" />
    <div className="w-[71px] border-l border-[#a0a0a0]" />
    <div className="w-[69px] border-l border-[#a0a0a0]" />
    <div className="w-[70px] border-l border-[#a0a0a0]" />
    <div className="w-[65px] border-l border-[#a0a0a0]" />
    <div className="flex w-[128px] gap-1 border-l border-[#a0a0a0] pl-1">
      <svg width="24" height="16" viewBox="0 0 24 16" shapeRendering="crispEdges" aria-hidden="true">
        {[0, 1, 2, 3, 4, 5, 6, 7].map((n) => (
          <g key={n}>
            <rect x={n * 3} y="2" width="2" height={10 - n} fill="#6b8e23" />
            <rect x={n * 3} y={12 - n} width="2" height={4 + n} fill="#1d4f7c" />
          </g>
        ))}
      </svg>
      <span>241/3 kb</span>
    </div>
  </footer>
)

export default function App() {
  return (
    <div className="flex h-screen flex-col overflow-hidden bg-[#f0f0f0] font-['Open_Sans','Noto_Sans',sans-serif] text-black">
      <header className="relative flex h-[23px] shrink-0 items-center justify-center bg-[#66caea]">
        <svg width="16" height="16" viewBox="0 0 16 16" className="absolute top-1 left-[2px]" aria-hidden="true">
          <circle cx="8" cy="8" r="7" fill="#55413a" stroke="#8c9298" strokeWidth="1.5" />
          <path d="M3 10c1-4 3-6 6-6l3 3-2 1 2 4-3-2-3 3z" fill="#c96a2a" />
          <path d="m5 5 4-2 3 2" stroke="#d9d4d0" fill="none" />
        </svg>
        <h1 className="text-[14px] leading-5">135206078: FXOpen-Demo STP - Demo Account - FXOpen Investments Inc. - [GBPUSD,H1]</h1>
        <WindowButtons />
      </header>
      <MenuBar />
      <MainToolbar />
      <DrawToolbar />
      <div className="flex min-h-0 grow">
        <aside className="flex w-[245px] shrink-0 flex-col pr-1 pl-[3px]">
          <MarketWatch />
          <Navigator />
        </aside>
        <Chart />
      </div>
      <Terminal />
      <StatusBar />
    </div>
  )
}
